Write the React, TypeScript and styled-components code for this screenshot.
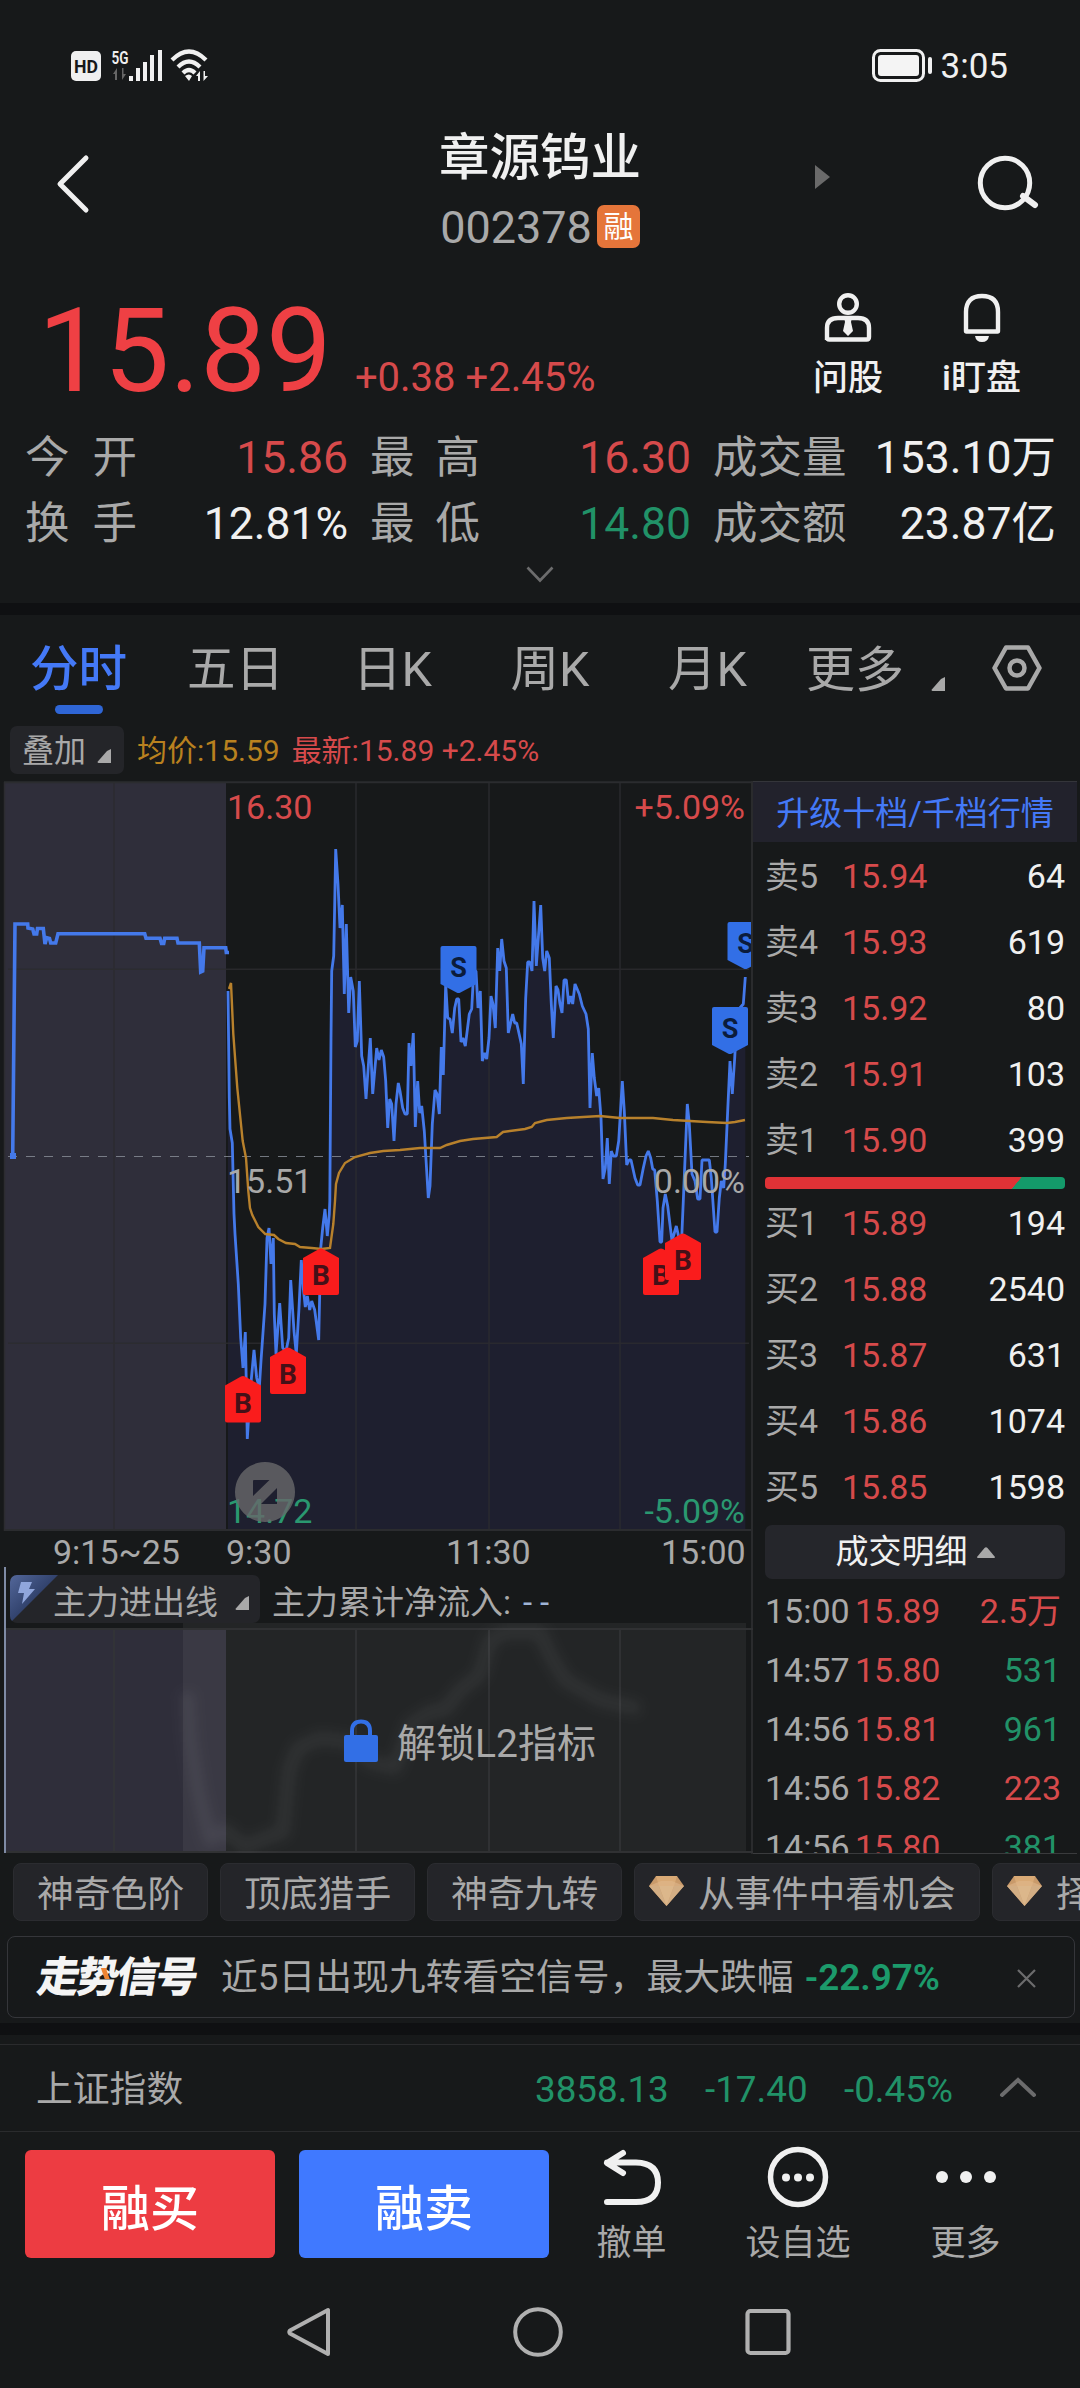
import React from "react";
import styled, { createGlobalStyle } from "styled-components";

const c = {
  bg: "#17191a",
  band: "#0f1012",
  chip: "#242529",
  line: "#2a2b2d",
  text: "#f0f0f0",
  dim: "#a9a9a9",
  faint: "#6c6c6d",
  red: "#d64a4b",
  hot: "#ef4044",
  green: "#219268",
  blue: "#4479f7",
  gold: "#b9811f",
};

const font = `Roboto, "Noto Sans CJK SC", sans-serif`;

const Global = createGlobalStyle`
  html, body { margin: 0; padding: 0; background: ${c.bg}; }
  * { box-sizing: border-box; }
  svg { display: block; flex: none; }
`;

const Screen = styled.main`
  width: 1080px;
  height: 2388px;
  overflow: hidden;
  display: flex;
  flex-direction: column;
  background: ${c.bg};
  color: ${c.text};
  font-family: ${font};
  white-space: nowrap;
`;

const StatusBar = styled.header`
  height: 130px;
  padding: 0 72px 0 71px;
  display: flex;
  align-items: center;
  justify-content: space-between;
`;

const StatusGroup = styled.div`
  display: flex;
  align-items: center;
  gap: 8px;
  font-size: 35px;
  line-height: 40px;
`;

const StatusTime = styled.span`
  padding-top: 3px;
`;

const TitleBar = styled.div`
  height: 130px;
  display: grid;
  grid-template-columns: 435px 210px 170px 160px 1fr;
  align-items: start;
`;

const Slot = styled.div<{ $top: number; $left?: number }>`
  padding: ${(p) => p.$top}px 0 0 ${(p) => p.$left ?? 0}px;
`;

const TitleBlock = styled.div`
  display: flex;
  flex-direction: column;
  align-items: center;
  padding-top: 3px;
`;

const StockName = styled.h1`
  margin: 0;
  font-size: 50.5px;
  line-height: 50px;
  font-weight: 500;
`;

const StockCode = styled.div`
  margin-top: 22px;
  display: flex;
  align-items: center;
  gap: 5px;
  font-size: 45px;
  line-height: 46px;
  color: ${c.dim};
`;

const MarginTag = styled.span`
  width: 43px;
  height: 43px;
  margin-top: -4px;
  border-radius: 7px;
  background: #e5753a;
  color: #fff;
  font-size: 30px;
  line-height: 43px;
  text-align: center;
`;

const Quote = styled.section`
  height: 343px;
`;

const PriceRow = styled.div`
  height: 165px;
  padding: 33px 59px 0 38px;
  display: flex;
  justify-content: space-between;
`;

const PriceGroup = styled.div`
  display: flex;
  align-items: baseline;
  height: 110px;
  gap: 23px;
  padding-top: 2px;
`;

const Price = styled.span`
  font-size: 117px;
  line-height: 112px;
  color: ${c.hot};
`;

const Change = styled.span`
  font-size: 40px;
  color: ${c.red};
`;

const QuickActions = styled.div`
  display: flex;
  gap: 59px;
`;

const QuickAction = styled.div`
  display: flex;
  flex-direction: column;
  align-items: center;
  gap: 17px;
  font-size: 35px;
  line-height: 38px;
  font-weight: 500;
`;

const Stats = styled.div`
  display: grid;
  grid-template-columns: 112px 211px 22px 110px 211px 22px 134px 209px;
  grid-template-rows: 66px 66px;
  padding-left: 25px;
  align-items: center;
  font-size: 44.5px;
  line-height: 50px;
`;

const StatLabel = styled.span<{ $spread?: boolean }>`
  display: flex;
  justify-content: ${(p) => (p.$spread ? "space-between" : "flex-start")};
  color: ${c.dim};
`;

const StatValue = styled.span<{ $color: string }>`
  text-align: right;
  color: ${(p) => p.$color};
`;

const Expand = styled.div`
  display: flex;
  justify-content: center;
  padding-top: 9px;
`;

const Band = styled.div`
  height: 12px;
  flex: none;
  background: ${c.band};
`;

const Tabs = styled.nav`
  height: 105px;
  display: grid;
  grid-template-columns: 157px 157px 157px 158px 157px 206px 1fr;
  align-items: start;
  font-size: 48.5px;
  line-height: 50px;
  color: ${c.dim};
  padding-top: 28px;
`;

const Tab = styled.div<{ $active?: boolean }>`
  display: flex;
  flex-direction: column;
  align-items: center;
  gap: 10px;
  padding-top: 2px;
  ${(p) => p.$active && `color: ${c.blue}; font-weight: 500;`}
`;

const Underline = styled.i`
  width: 48px;
  height: 9px;
  border-radius: 5px;
  background: #2f66d6;
`;

const MoreTab = styled.div`
  display: flex;
  align-items: flex-end;
  gap: 27px;
  padding: 3px 0 0 20px;
  font-size: 49px;
`;

const CornerLift = styled.span`
  padding-bottom: 5px;
`;

const Legend = styled.div`
  height: 61px;
  padding: 6px 0 0 10px;
  display: flex;
  font-size: 30px;
  line-height: 49px;
`;

const Overlay = styled.div`
  width: 114px;
  height: 48px;
  border-radius: 7px;
  background: ${c.chip};
  display: flex;
  align-items: center;
  gap: 11px;
  padding: 3px 0 0 12px;
  margin-right: 13px;
  font-size: 32px;
  color: ${c.dim};
`;

const CornerDrop = styled.span`
  padding-top: 8px;
`;

const LegendItem = styled.span<{ $color: string }>`
  color: ${(p) => p.$color};
  margin-right: 12px;
`;

const Board = styled.section`
  height: 1073px;
  display: grid;
  grid-template-columns: 753px 324px;
`;

const Charts = styled.div`
  display: flex;
  flex-direction: column;
  border-right: 2px solid ${c.line};
  height: 1073px;
`;

const TimeAxis = styled.div`
  height: 36px;
  display: grid;
  grid-template-columns: 226px 220px 215px 81px;
  font-size: 34px;
  line-height: 42px;
  color: ${c.dim};
`;

const AxisLabel = styled.span<{ $left?: number }>`
  padding-left: ${(p) => p.$left ?? 0}px;
`;

const Flow = styled.div`
  height: 286px;
  margin-left: 4px;
  border-left: 2px solid #7f8ba5;
  display: flex;
  flex-direction: column;
`;

const FlowHead = styled.div`
  height: 56px;
  padding: 8px 0 0 4px;
  display: flex;
  font-size: 33px;
  line-height: 52px;
  color: ${c.dim};
`;

const FlowPicker = styled.div`
  width: 250px;
  height: 48px;
  border-radius: 7px;
  background: ${c.chip};
  display: flex;
  align-items: center;
  overflow: hidden;
`;

const FlowName = styled.span`
  margin: 7px 17px 0 -6px;
`;

const FlowSum = styled.span`
  padding: 2px 0 0 12px;
`;

const Dashes = styled.b`
  color: #9fb4d6;
  font-weight: 400;
  margin-left: 12px;
  letter-spacing: 8px;
`;

const FlowBody = styled.div`
  position: relative;
  height: 230px;
`;

const Unlock = styled.div`
  position: absolute;
  left: 338px;
  top: 91px;
  display: flex;
  align-items: center;
  gap: 19px;
  font-size: 39px;
  line-height: 46px;
  color: ${c.dim};
`;

const UnlockText = styled.span`
  padding-top: 7px;
`;

const Book = styled.aside`
  height: 1073px;
  overflow: hidden;
  display: flex;
  flex-direction: column;
  border-top: 1px solid #34353a;
  border-bottom: 1px solid #3a3b3d;
`;

const Upgrade = styled.div`
  height: 60px;
  flex: none;
  background: #22222c;
  color: ${c.blue};
  font-size: 33px;
  line-height: 64px;
  text-align: center;
`;

const Level = styled.div`
  height: 66px;
  flex: none;
  padding: 2px 12px 0 12px;
  display: grid;
  grid-template-columns: 77px 100px 1fr;
  align-items: center;
  font-size: 34px;
  line-height: 40px;
`;

const Cell = styled.span<{ $color: string; $right?: boolean }>`
  color: ${(p) => p.$color};
  text-align: ${(p) => (p.$right ? "right" : "left")};
`;

const Balance = styled.div`
  height: 12px;
  flex: none;
  margin: 5px 12px 0;
  border-radius: 4px;
  background: linear-gradient(130deg, #e03236 0 82.7%, #149a6a 82.9%);
`;

const DetailButton = styled.div`
  height: 54px;
  margin: 6px 12px 1px;
  border-radius: 7px;
  background: #25262b;
  display: flex;
  align-items: center;
  justify-content: center;
  gap: 9px;
  font-size: 33px;
  line-height: 56px;
  flex: none;
`;

const Trade = styled.div`
  height: 59px;
  flex: none;
  padding: 2px 16px 0 12px;
  display: grid;
  grid-template-columns: 90px 100px 1fr;
  align-items: center;
  font-size: 34px;
  line-height: 40px;
`;

const Chips = styled.div`
  height: 82px;
  padding: 9px 0 0 13px;
  display: flex;
  gap: 12px;
  overflow: hidden;
`;

const Chip = styled.div<{ $w: number }>`
  flex: none;
  width: ${(p) => p.$w}px;
  height: 58px;
  border: 1px solid #2b2c30;
  border-radius: 8px;
  background: ${c.chip};
  color: ${c.dim};
  display: flex;
  gap: 14px;
  padding-left: ${(p) => (p.$w < 200 ? 23 : 14)}px;
  font-size: 36.8px;
  line-height: 61px;
`;

const Gem = styled.svg`
  margin-top: 12px;
`;

const Signal = styled.div`
  height: 82px;
  margin: 0 5px 0 7px;
  border: 1px solid #35363a;
  border-radius: 8px;
  display: flex;
  align-items: center;
  padding: 2px 38px 0 30px;
  font-size: 36.8px;
  line-height: 44px;
  color: ${c.dim};
  flex: none;
`;

const SignalLogo = styled.b`
  position: relative;
  width: 183px;
  font-size: 42px;
  font-weight: 900;
  letter-spacing: -2.6px;
  color: #f4f4f4;
  transform: skewX(-10deg);
`;

const Spark = styled.i`
  position: absolute;
  left: 64px;
  top: 12px;
  width: 5px;
  height: 11px;
  background: #ee8433;
  transform: skewX(28deg);
`;

const Drop = styled.b`
  margin-left: 11px;
  flex: 1;
  color: #1c9a6b;
  font-weight: 600;
`;

const IndexBar = styled.div`
  margin-top: 9px;
  height: 88px;
  flex: none;
  border-top: 1px solid ${c.line};
  border-bottom: 1px solid ${c.line};
  padding: 4px 44px 0 36px;
  display: grid;
  grid-template-columns: 499px 170px 139px 155px 1fr;
  align-items: center;
  font-size: 36.8px;
  line-height: 44px;
  color: ${c.green};
`;

const IndexName = styled.span`
  color: ${c.dim};
`;

const IndexArrow = styled.svg`
  margin-top: -6px;
`;

const Actions = styled.div`
  height: 150px;
  padding: 18px 0 0 25px;
  display: grid;
  grid-template-columns: 274px 250px 165px 168px 167px;
`;

const TradeButton = styled.button<{ $color: string }>`
  width: 250px;
  height: 108px;
  border: 0;
  border-radius: 6px;
  background: ${(p) => p.$color};
  color: #fff;
  font: 500 49px/108px ${font};
  padding: 6px 0 0;
  overflow: hidden;
`;

const Tool = styled.div`
  display: flex;
  flex-direction: column;
  align-items: center;
  gap: 17px;
  margin: -4px 0 0;
  font-size: 35px;
  line-height: 38px;
  color: ${c.dim};
`;

const NavBar = styled.footer`
  flex: 1;
  padding: 22px 289px 0 287px;
  display: flex;
  justify-content: space-between;
  align-items: flex-start;
`;

const Corner = ({ color = c.dim }: { color?: string }) => (
  <svg width="14" height="14" viewBox="0 0 14 14">
    <path d="M14 0V14H1.5Q0 14 .8 12.6L10 2Z" fill={color} />
  </svg>
);

const preOpen =
  "12.7,1155 15,923 27.7,923 28,927 32.7,928 34,933 36.7,933 37.5,927.5 43.3,927.5 45,943 46.7,936.7 49.5,937.5 50.7,942 55.7,942 58,932.7 144.7,932.7 146,937.3 160,937.3 161.5,942.5 163.7,942.5 164.7,937.3 177,937.3 178,942 199.3,942 200.7,971 202.7,970 204,946.7 225.7,946.7 226.3,951.5 229,951.5";

const price =
  "228,990 229.3,1097 230,1128 232.3,1142 234,1213 235,1233 238.3,1283 240.7,1337 243,1367 245.3,1331 246,1367 247.3,1438 250.5,1387 254,1349 256.7,1377 259.3,1387 261,1360 265,1303 267,1237 269,1227 271,1263 273.3,1237 274.3,1313 276,1353 279.7,1302 282.7,1347 286,1350 288.7,1337 290.7,1279 294,1330 296.3,1353 299,1307 301.3,1259 303.3,1287 305.3,1306 307.3,1295 309.7,1309 311.7,1300 314.7,1309 318.7,1339 320.7,1247 322.7,1227 325,1208 327.3,1235 329.3,1213 329.8,1200 331,1037 331.7,970 333.7,955 334.7,903 335.7,848 338,883 340,927 342.3,904 344.3,993 346.3,923 348.7,1012 350.7,976 353.3,990 355.3,1046 357.3,1040 359.3,980 361.7,1055 363.7,1065 366,1098 370.3,1037 372.7,1093 376.7,1047 379,1059 381.3,1049 383.7,1056 385.7,1080 387.7,1127 389.7,1098 391.7,1103 394,1140 396,1103 398.3,1082 400,1090 402.7,1107 405,1113 407.3,1113 409,1042 411,1065 413.3,1032 415.3,1126 417.7,1080 419.7,1112 421.7,1105 424.3,1130 426.7,1170 428.3,1197 430,1185 432.3,1123 435,1089 437,1093 439.3,1113 441.3,1046 443.3,1074 445.7,983 447.7,1017 450,1018 452.3,1032 454.7,1007 456.7,998 458.7,998 461,1041 463,1037 465.3,1045 469.3,1013 471.7,1008 473.7,970 476,970 478,1007 480.3,990 482.3,1060 484.7,1052 486.7,1058 489,1037 491,995 493,1003 495.3,1027 497.7,947 499.7,970 501.7,938 504,960 506.3,967 508.3,1032 512.7,1013 514.7,1022 516.7,1022 520,1037 521.3,1043 523.3,1083 525.7,997 527.7,961 529.7,961 532,970 534,900 536.3,965 540.7,904 542.7,957 544.7,970 546.7,950 549.3,957 551.3,1003 553.3,1037 556,985 558,989 560,1003 562,1012 564,979 566.3,979 568.7,1003 570.7,995 572.7,1003 575,983 579.3,993 582.3,1005 586,1013 588.3,1028 590,1107 592.3,1052 594.3,1077 596.7,1095 598.7,1087 601,1117 603,1178 605.3,1167 607.3,1137 609.3,1183 611.3,1150 613.3,1155 616.3,1155 618.7,1140 620.7,1107 622.3,1080 624.3,1110 626.7,1164 629,1159 631,1159 635,1177 637.7,1184 640,1184 643.3,1167 646,1155 648.3,1150 650.7,1157 652.7,1168 654.7,1169 657.3,1200 660,1241 661.7,1241 663,1207 665.3,1193 667.7,1205 672,1240 676.3,1225 679,1237 681.7,1237 683.3,1200 687.3,1103 689.3,1123 692,1173 695,1180 697.7,1198 700,1198 702,1159 709.3,1159 711.3,1177 715,1231 717,1231 719.3,1197 721.3,1180 723.7,1187 725.3,1163 728,1103 730,1060 732.3,1093 734.7,1057 737.3,1010 743.3,1003 745.3,976";

const average =
  "229,988 231,982 233.3,1033 237.3,1087 242.7,1140 246,1157 248.3,1190 250,1207 252.3,1214 258.3,1226 265.3,1233 274,1234 278.3,1238 286,1242 295,1243 300,1246 311.7,1247 321.7,1248 330,1247 333.3,1223 335,1200 336,1183 339,1172 345,1162 355,1156 370,1152 383.3,1150 400,1149 420,1147 440,1147 446.7,1144 460,1140 473,1138 496.7,1136 503,1131 525,1128 531.7,1126 535,1122 546.7,1119 566.7,1117 600,1115 620,1117 653,1117 673,1119 707,1121 727,1122 735,1121 740,1120 745,1119";

const Sell = ({ x, y }: { x: number; y: number }) => (
  <g transform={`translate(${x} ${y})`}>
    <path d="M2 0H34Q36 0 36 2V38L20 46.5Q18 47.5 16 46.5L0 38V2Q0 0 2 0Z" fill="#326fe6" />
    <text x="18" y="31" textAnchor="middle" fontSize="27" fontWeight="700" fill="#0b1c3c">S</text>
  </g>
);

const Buy = ({ x, y }: { x: number; y: number }) => (
  <g transform={`translate(${x} ${y})`}>
    <path d="M2 47H34Q36 47 36 45V10L20 1Q18 0 16 1L0 10V45Q0 47 2 47Z" fill="#fa1c1c" />
    <text x="18" y="37" textAnchor="middle" fontSize="28" fontWeight="700" fill="#451018">B</text>
  </g>
);

const PriceChart = () => (
  <svg width="751" height="750" viewBox="0 780 751 750" fontFamily="Roboto" fontSize="34">
    <rect x="4" y="781" width="222" height="749" fill="#2f2e3a" />
    <polygon points={`228,1530 ${price} 745.3,1530`} fill="#1e1f2f" />
    <g stroke="#2b2c2f" strokeWidth="1.6" strokeOpacity=".85">
      <path d="M114 781V1530M356 781V1530M489 781V1530M620 781V1530M4.5 781V1530M8 968.3H749M8 1342.3H749" />
      <path d="M4 781.3H751M4 1529H751" strokeWidth="2" strokeOpacity="1" />
    </g>
    <path d="M8 1155.5H749" stroke="#8b909a" strokeOpacity=".8" strokeWidth="1.1" strokeDasharray="9 9" />
    <polyline points={preOpen} fill="none" stroke="#4479ea" strokeWidth="3.6" />
    <rect x="10" y="1152" width="6" height="6" fill="#4479ea" />
    <polyline points={price} fill="none" stroke="#4479ea" strokeWidth="2.8" strokeLinejoin="bevel" />
    <polyline points={average} fill="none" stroke="#b8812c" strokeWidth="2.4" />
    <text x="227" y="818" fill={c.red}>16.30</text>
    <text x="745" y="818" textAnchor="end" fill={c.red}>+5.09%</text>
    <text x="227" y="1192" fill={c.dim}>15.51</text>
    <text x="745" y="1192" textAnchor="end" fill={c.dim}>0.00%</text>
    <text x="227" y="1522" fill="#2a9870">14.72</text>
    <text x="745" y="1522" textAnchor="end" fill="#2a9870">-5.09%</text>
    <Sell x={440.5} y={945} />
    <Sell x={727.5} y={921} />
    <Sell x={712} y={1006} />
    <Buy x={303} y={1247} />
    <Buy x={270} y={1346} />
    <Buy x={225} y={1374.5} />
    <Buy x={643} y={1247} />
    <Buy x={665} y={1232} />
    <path
      fillRule="evenodd"
      fill="#68686a"
      fillOpacity=".8"
      d="M265 1461a30 30 0 1 0 .01 0ZM254 1479H269.5L253 1495V1480Q253 1479 254 1479ZM277 1487V1503H261Z"
    />
  </svg>
);

const FlowChart = () => (
  <svg width="747" height="230" viewBox="6 1623 747 230">
    <defs>
      <filter id="soft" x="-10%" y="-10%" width="120%" height="120%">
        <feGaussianBlur stdDeviation="6" />
      </filter>
    </defs>
    <rect x="6" y="1629" width="220" height="224" fill="#2f2e3a" />
    <rect x="183" y="1623" width="563" height="230" fill="#fff" fillOpacity=".055" />
    <path d="M114 1629V1853M356 1629V1853M489 1629V1853M620 1629V1853" stroke="#343537" strokeWidth="1.6" />
    <path d="M6 1629H753M6 1852H753" stroke="#303133" strokeWidth="2" />
    <polyline
      filter="url(#soft)"
      fill="none"
      stroke="#fff"
      strokeOpacity=".06"
      strokeWidth="14"
      strokeLinejoin="round"
      points="187,1692 190,1740 198,1790 210,1840 225,1830 245,1847 265,1838 283,1832 289,1770 298,1748 320,1738 350,1742 370,1762 395,1768 410,1725 430,1712 445,1710 460,1690 480,1675 490,1640 505,1632 540,1632 550,1655 565,1680 600,1700 640,1709"
    />
  </svg>
);

const GemIcon = () => (
  <Gem width="35" height="30" viewBox="0 0 35 30">
    <path d="M7 0H28L35 10L17.5 30L0 10Z" fill="#c99a6a" />
    <path d="M7 0H28L25 10H10Z" fill="#d9aa76" />
    <path d="M0 10H10L17.5 30ZM35 10H25L17.5 30Z" fill="#d3ae84" />
    <path d="M10 10H25L17.5 30Z" fill="#dcb78b" />
    <path d="M12 5L0 10H35L23 5Z" fill="#e0b88c" fillOpacity=".6" />
  </Gem>
);

const sells = [["卖5", "15.94", "64"], ["卖4", "15.93", "619"], ["卖3", "15.92", "80"], ["卖2", "15.91", "103"], ["卖1", "15.90", "399"]];
const buys = [["买1", "15.89", "194"], ["买2", "15.88", "2540"], ["买3", "15.87", "631"], ["买4", "15.86", "1074"], ["买5", "15.85", "1598"]];
const trades: [string, string, string, boolean][] = [
  ["15:00", "15.89", "2.5万", true],
  ["14:57", "15.80", "531", false],
  ["14:56", "15.81", "961", false],
  ["14:56", "15.82", "223", true],
  ["14:56", "15.80", "381", false],
];

const LevelRow = ({ row }: { row: string[] }) => (
  <Level>
    <Cell $color={c.dim}>{row[0]}</Cell>
    <Cell $color={c.red}>{row[1]}</Cell>
    <Cell $color={c.text} $right>{row[2]}</Cell>
  </Level>
);

export default function App() {
  return (
    <>
      <Global />
      <Screen>
        <StatusBar>
          <svg width="138" height="34" viewBox="0 0 138 34" fill="#f0f0f0" fontFamily="Roboto">
            <rect x="0" y="3" width="30" height="30" rx="5" />
            <text x="15" y="24.5" textAnchor="middle" fontSize="18" fontWeight="700" fill={c.bg} textLength="24" lengthAdjust="spacingAndGlyphs">HD</text>
            <text x="40.5" y="15.500" fontSize="18" fontWeight="600" textLength="17" lengthAdjust="spacingAndGlyphs">5G</text>
            <path d="M42 26L46 20V32H44V26ZM55 26L51 32V20H52.5V26Z" fill="#666" />
            <path d="M58 28h4v5h-4ZM65 20h4v13h-4ZM72 14h4v19h-4ZM79 7h4v26h-4ZM87 2h4v31h-4Z" />
            <g fill="none" stroke="#f0f0f0" strokeWidth="4.2">
              <path d="M101 12Q118 -5 135 12" />
              <path d="M107 19Q118 8 129 19" />
              <path d="M112 25Q118 19 124 25" />
            </g>
            <path d="M118 33L114 28Q118 25 121 28ZM125 28L129 23V33H127V28ZM137 28L132.500 33V23H134V28Z" />
          </svg>
          <StatusGroup>
            <svg width="61" height="33" viewBox="0 0 61 33">
              <rect x="1.500" y="1.500" width="50" height="30" rx="7" fill="none" stroke="#f0f0f0" strokeWidth="3" />
              <rect x="6" y="6" width="41" height="21" rx="3" fill="#f4f4f4" />
              <rect x="56" y="8" width="4" height="17" rx="2" fill="#f0f0f0" />
            </svg>
            <StatusTime>3:05</StatusTime>
          </StatusGroup>
        </StatusBar>

        <TitleBar>
          <Slot $top={24} $left={55}>
            <svg width="36" height="60" viewBox="0 0 36 60">
              <path d="M31 4L5 30L31 56" fill="none" stroke="#f0f0f0" strokeWidth="5" strokeLinecap="round" strokeLinejoin="round" />
            </svg>
          </Slot>
          <TitleBlock>
            <StockName>章源钨业</StockName>
            <StockCode>002378<MarginTag>融</MarginTag></StockCode>
          </TitleBlock>
          <Slot $top={35} $left={170}>
            <svg width="15" height="24" viewBox="0 0 15 24"><path d="M0 0L15 12L0 24Z" fill="#6a6a6a" /></svg>
          </Slot>
          <Slot $top={24} />
          <Slot $top={24}>
            <svg width="66" height="60" viewBox="0 0 66 60" fill="none" stroke="#f0f0f0">
              <circle cx="30" cy="29" r="24.700" strokeWidth="5" />
              <path d="M48 42L60 51" strokeWidth="6" strokeLinecap="round" />
            </svg>
          </Slot>
        </TitleBar>

        <Quote>
          <PriceRow>
            <PriceGroup>
              <Price>15.89</Price>
              <Change>+0.38 +2.45%</Change>
            </PriceGroup>
            <QuickActions>
              <QuickAction>
                <svg width="48" height="50" viewBox="0 0 48 50" fill="none" stroke="#f0f0f0" strokeWidth="4.400">
                  <circle cx="24" cy="11" r="8.800" />
                  <path d="M3 47V35Q3 25 14 25H34Q45 25 45 35V44Q45 46.500 42.500 46.500H5.500Q3 46.500 3 44" />
                  <path d="M20 24H28L27 29L29 38L24 43L19 38L21 29Z" fill="#f0f0f0" stroke="none" />
                </svg>
                问股
              </QuickAction>
              <QuickAction>
                <svg width="40" height="50" viewBox="0 0 40 50">
                  <path d="M4 38V19Q4 3 20 3T36 19V38Q36 38.500 35.500 38.500H4.500Q4 38.500 4 38Z" fill="none" stroke="#f0f0f0" strokeWidth="4.400" />
                  <path d="M13 43H27Q26 49 20 49T13 43Z" fill="#f0f0f0" />
                </svg>
                i盯盘
              </QuickAction>
            </QuickActions>
          </PriceRow>
          <Stats>
            <StatLabel $spread><span>今</span><span>开</span></StatLabel>
            <StatValue $color={c.red}>15.86</StatValue>
            <span />
            <StatLabel $spread><span>最</span><span>高</span></StatLabel>
            <StatValue $color={c.red}>16.30</StatValue>
            <span />
            <StatLabel>成交量</StatLabel>
            <StatValue $color={c.text}>153.10万</StatValue>
            <StatLabel $spread><span>换</span><span>手</span></StatLabel>
            <StatValue $color={c.text}>12.81%</StatValue>
            <span />
            <StatLabel $spread><span>最</span><span>低</span></StatLabel>
            <StatValue $color={c.green}>14.80</StatValue>
            <span />
            <StatLabel>成交额</StatLabel>
            <StatValue $color={c.text}>23.87亿</StatValue>
          </Stats>
          <Expand>
            <svg width="28" height="17" viewBox="0 0 28 17"><path d="M1.500 1.500L14 14.500L26.500 1.500" fill="none" stroke={c.faint} strokeWidth="2.600" /></svg>
          </Expand>
        </Quote>
        <Band />

        <Tabs>
          <Tab $active>分时<Underline /></Tab>
          <Tab>五日</Tab>
          <Tab>日K</Tab>
          <Tab>周K</Tab>
          <Tab>月K</Tab>
          <MoreTab>更多<CornerLift><Corner /></CornerLift></MoreTab>
          <svg width="50" height="50" viewBox="0 0 50 50" fill="none" stroke={c.dim} strokeWidth="4.500">
            <path d="M14 4.500H36L47.500 25L36 45.500H14L2.500 25Z" strokeLinejoin="round" />
            <circle cx="25" cy="25" r="7.500" />
          </svg>
        </Tabs>

        <Legend>
          <Overlay>叠加<CornerDrop><Corner /></CornerDrop></Overlay>
          <LegendItem $color={c.gold}>均价:15.59</LegendItem>
          <LegendItem $color={c.red}>最新:15.89 +2.45%</LegendItem>
        </Legend>

        <Board>
          <Charts>
            <PriceChart />
            <TimeAxis>
              <AxisLabel $left={53}>9:15~25</AxisLabel>
              <AxisLabel>9:30</AxisLabel>
              <AxisLabel>11:30</AxisLabel>
              <AxisLabel>15:00</AxisLabel>
            </TimeAxis>
            <Flow>
              <FlowHead>
                <FlowPicker>
                  <svg width="49" height="48" viewBox="0 0 49 48">
                    <defs>
                      <linearGradient id="flag" x1="0" y1="0" x2=".6" y2=".6">
                        <stop offset="0" stopColor="#53679a" />
                        <stop offset="1" stopColor="#2b3b64" />
                      </linearGradient>
                    </defs>
                    <path d="M0 0H48L0 48Z" fill="url(#flag)" />
                    <path d="M11 7H22L19 14H25L12 29L14 18H8Z" fill="#90a6dc" />
                  </svg>
                  <FlowName>主力进出线</FlowName>
                  <CornerDrop><Corner /></CornerDrop>
                </FlowPicker>
                <FlowSum>主力累计净流入:<Dashes>--</Dashes></FlowSum>
              </FlowHead>
              <FlowBody>
                <FlowChart />
                <Unlock>
                  <svg width="34" height="43" viewBox="0 0 34 43">
                    <path d="M8 20V12Q8 2.500 17 2.500T26 12V20" fill="none" stroke="#326fe6" strokeWidth="4" />
                    <rect x="0" y="16" width="34" height="27" rx="2" fill="#326fe6" />
                  </svg>
                  <UnlockText>解锁L2指标</UnlockText>
                </Unlock>
              </FlowBody>
            </Flow>
          </Charts>

          <Book>
            <Upgrade>升级十档/千档行情</Upgrade>
            {sells.map((r) => <LevelRow key={r[0]} row={r} />)}
            <Balance />
            {buys.map((r) => <LevelRow key={r[0]} row={r} />)}
            <DetailButton>
              成交明细
              <svg width="18" height="11" viewBox="0 0 18 11"><path d="M0 10L7.500 1Q9 -.5 10.500 1L18 10Q18 11 17 11H1Q0 11 0 10Z" fill={c.dim} /></svg>
            </DetailButton>
            {trades.map(([t, p, v, up], i) => (
              <Trade key={i}>
                <Cell $color={c.dim}>{t}</Cell>
                <Cell $color={c.red}>{p}</Cell>
                <Cell $color={up ? c.red : c.green} $right>{v}</Cell>
              </Trade>
            ))}
          </Book>
        </Board>

        <Chips>
          <Chip $w={195}>神奇色阶</Chip>
          <Chip $w={195}>顶底猎手</Chip>
          <Chip $w={195}>神奇九转</Chip>
          <Chip $w={346}><GemIcon />从事件中看机会</Chip>
          <Chip $w={346}><GemIcon />择</Chip>
        </Chips>

        <Signal>
          <SignalLogo>走势信号<Spark /></SignalLogo>
          近5日出现九转看空信号，最大跌幅
          <Drop>-22.97%</Drop>
          <svg width="19" height="19" viewBox="0 0 19 19"><path d="M1 1L18 18M18 1L1 18" stroke={c.faint} strokeWidth="2.200" /></svg>
        </Signal>
        <Slot $top={5} />
        <Band />

        <IndexBar>
          <IndexName>上证指数</IndexName>
          <span>3858.13</span>
          <span>-17.40</span>
          <span>-0.45%</span>
          <IndexArrow width="38" height="22" viewBox="0 0 38 22"><path d="M3 19L19 4L35 19" fill="none" stroke={c.faint} strokeWidth="4" strokeLinecap="round" /></IndexArrow>
        </IndexBar>

        <Actions>
          <TradeButton $color="#ed3c42">融买</TradeButton>
          <TradeButton $color="#4079ff">融卖</TradeButton>
          <Tool>
            <svg width="60" height="62" viewBox="0 0 60 62" fill="none" stroke="#f0f0f0" strokeWidth="6" strokeLinecap="round">
              <path d="M21 7L5 17L21 27M5 16.500H34Q56 17 56 36.500T34 56H5" strokeLinejoin="round" />
            </svg>
            撤单
          </Tool>
          <Tool>
            <svg width="62" height="62" viewBox="0 0 62 62">
              <circle cx="31" cy="31" r="27.500" fill="none" stroke="#f0f0f0" strokeWidth="5.500" />
              <g fill="#f0f0f0"><circle cx="19" cy="31.500" r="4" /><circle cx="31" cy="31.500" r="4" /><circle cx="43" cy="31.500" r="4" /></g>
            </svg>
            设自选
          </Tool>
          <Tool>
            <svg width="62" height="62" viewBox="0 0 62 62" fill="#f0f0f0">
              <circle cx="7" cy="31" r="6" /><circle cx="31" cy="31" r="6" /><circle cx="55" cy="31" r="6" />
            </svg>
            更多
          </Tool>
        </Actions>

        <NavBar>
          <svg width="44" height="56" viewBox="0 0 44 56"><path d="M41 6V50L3 29.500Q1.500 28 3 26.500Z" fill="none" stroke="#b0b0b0" strokeWidth="4" strokeLinejoin="round" /></svg>
          <svg width="52" height="56" viewBox="0 0 52 56"><circle cx="26" cy="28" r="22.800" fill="none" stroke="#b0b0b0" strokeWidth="4" /></svg>
          <svg width="46" height="56" viewBox="0 0 46 56"><rect x="2.500" y="7" width="41" height="42" rx="3" fill="none" stroke="#b0b0b0" strokeWidth="4.200" /></svg>
        </NavBar>
      </Screen>
    </>
  );
}
